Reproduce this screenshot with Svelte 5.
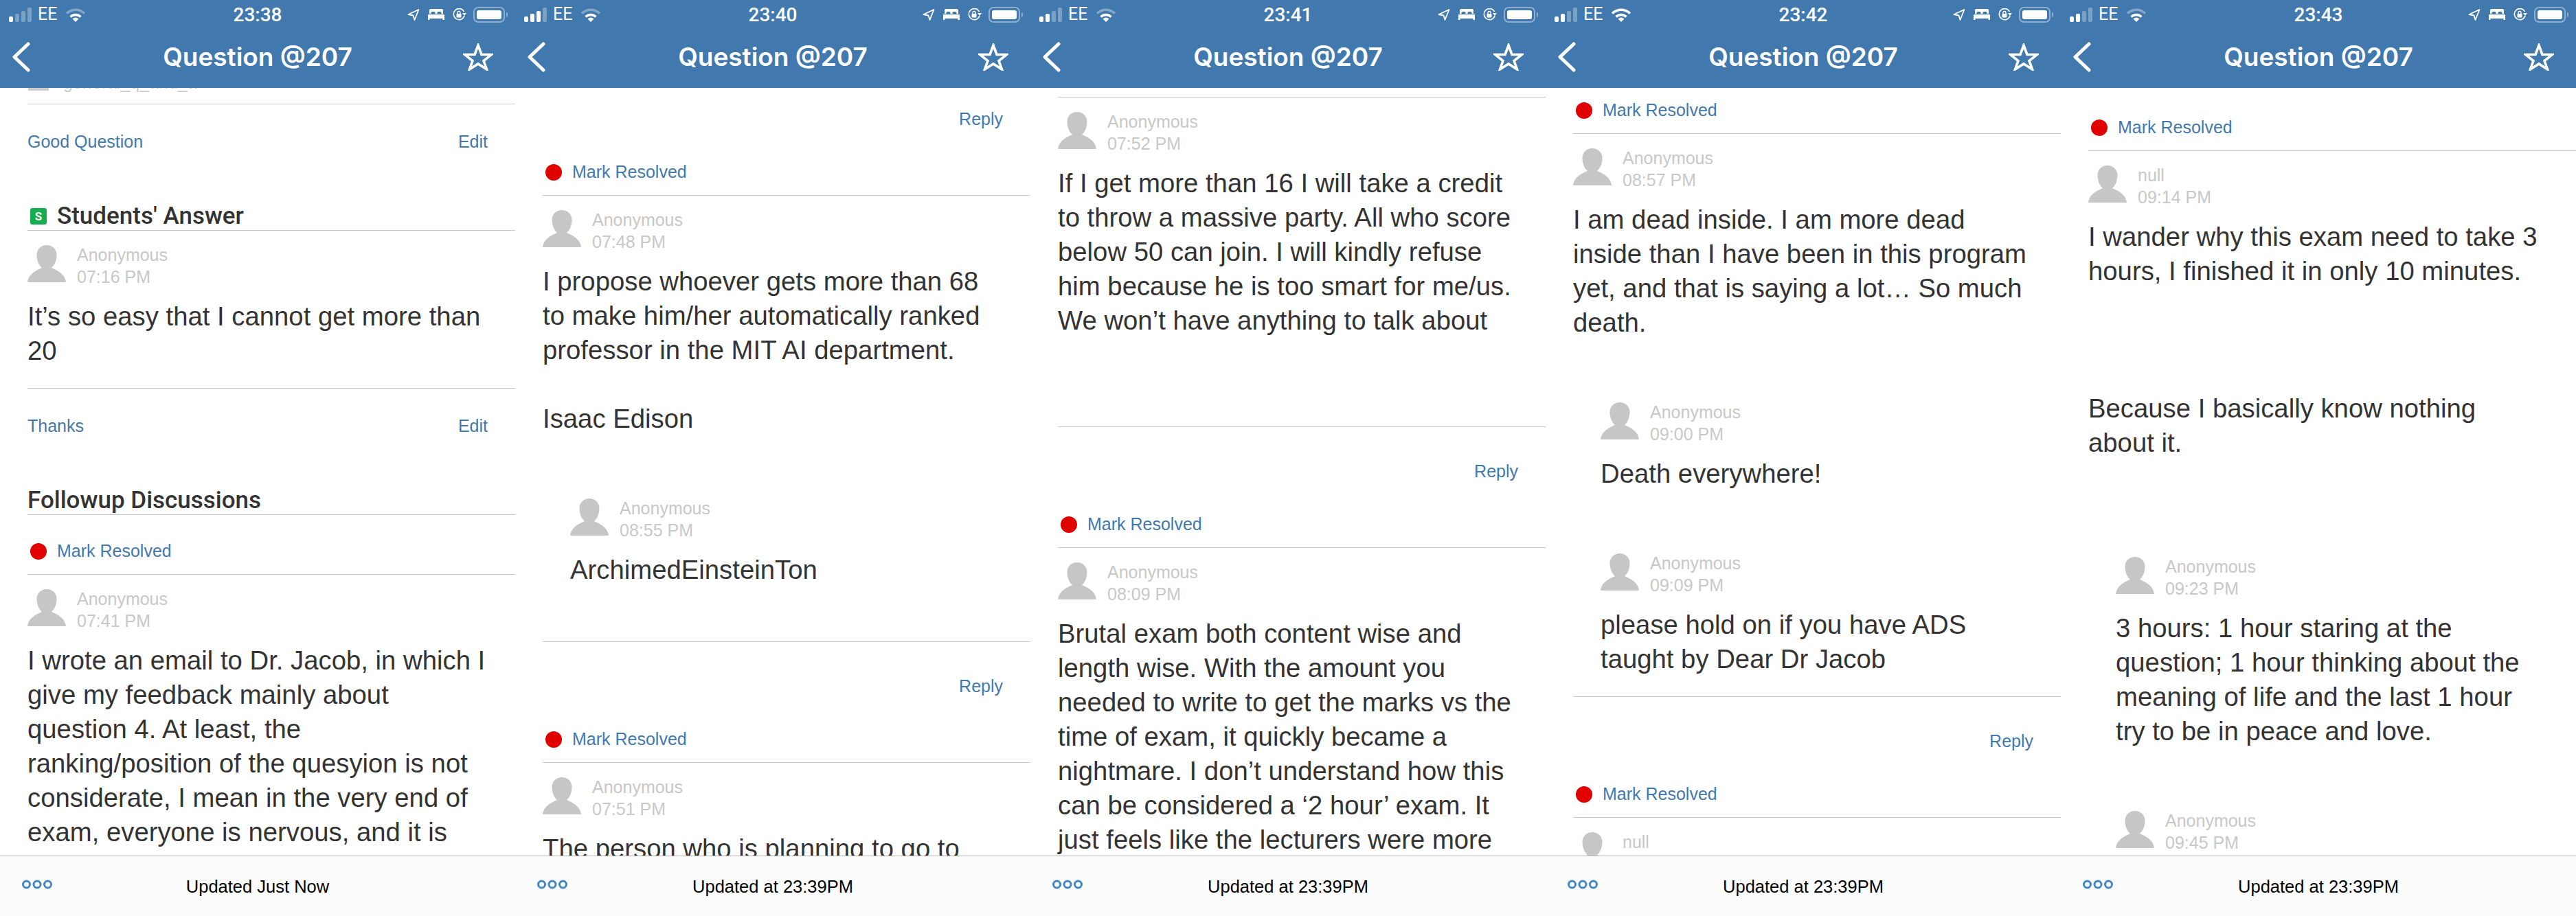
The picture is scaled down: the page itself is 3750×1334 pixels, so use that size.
<script>
	const anon = 'Anonymous';

	const panels = [
		{
			clock: '23:38', bars: 1, wifi: 2, updated: 'Updated Just Now', offset: -22,
			blocks: [
				{ kind: 'tag', text: 'general_q_and_a' },
				{ kind: 'rule' },
				{ kind: 'action', left: 'Good Question', right: 'Edit' },
				{ kind: 'head', text: "Students' Answer", badge: true },
				{ kind: 'post', name: anon, time: '07:16 PM', lines: ['It’s so easy that I cannot get more than', '20'] },
				{ kind: 'rule' },
				{ kind: 'action', left: 'Thanks', right: 'Edit' },
				{ kind: 'head', text: 'Followup Discussions' },
				{ kind: 'mark', first: true },
				{
					kind: 'post', name: anon, time: '07:41 PM',
					lines: [
						'I wrote an email to Dr. Jacob, in which I',
						'give my feedback mainly about',
						'question 4. At least, the',
						'ranking/position of the quesyion is not',
						'considerate, I mean in the very end of',
						'exam, everyone is nervous, and it is'
					]
				}
			]
		},
		{
			clock: '23:40', bars: 3, wifi: 2, updated: 'Updated at 23:39PM', offset: -19,
			blocks: [
				{ kind: 'reply' },
				{ kind: 'mark' },
				{
					kind: 'post', name: anon, time: '07:48 PM',
					lines: [
						'I propose whoever gets more than 68',
						'to make him/her automatically ranked',
						'professor in the MIT AI department.',
						'',
						'Isaac Edison'
					],
					replies: [{ name: anon, time: '08:55 PM', lines: ['ArchimedEinsteinTon', ''] }]
				},
				{ kind: 'rule' },
				{ kind: 'reply' },
				{ kind: 'mark' },
				{ kind: 'post', name: anon, time: '07:51 PM', lines: ['The person who is planning to go to'] }
			]
		},
		{
			clock: '23:41', bars: 2, wifi: 2, updated: 'Updated at 23:39PM', offset: 13,
			blocks: [
				{ kind: 'rule' },
				{
					kind: 'post', name: anon, time: '07:52 PM',
					lines: [
						'If I get more than 16 I will take a credit',
						'to throw a massive party. All who score',
						'below 50 can join. I will kindly refuse',
						'him because he is too smart for me/us.',
						'We won’t have anything to talk about',
						'',
						''
					]
				},
				{ kind: 'rule' },
				{ kind: 'reply' },
				{ kind: 'mark' },
				{
					kind: 'post', name: anon, time: '08:09 PM',
					lines: [
						'Brutal exam both content wise and',
						'length wise. With the amount you',
						'needed to write to get the marks vs the',
						'time of exam, it quickly became a',
						'nightmare. I don’t understand how this',
						'can be considered a ‘2 hour’ exam. It',
						'just feels like the lecturers were more'
					]
				}
			]
		},
		{
			clock: '23:42', bars: 2, wifi: 3, updated: 'Updated at 23:39PM', offset: -1,
			blocks: [
				{ kind: 'mark' },
				{
					kind: 'post', name: anon, time: '08:57 PM',
					lines: [
						'I am dead inside. I am more dead',
						'inside than I have been in this program',
						'yet, and that is saying a lot… So much',
						'death.'
					],
					replies: [
						{ name: anon, time: '09:00 PM', lines: ['Death everywhere!'] },
						{ name: anon, time: '09:09 PM', lines: ['please hold on if you have ADS', 'taught by Dear Dr Jacob'] }
					]
				},
				{ kind: 'rule' },
				{ kind: 'reply' },
				{ kind: 'mark' },
				{ kind: 'post', name: 'null', time: '09:14 PM', lines: [] }
			]
		},
		{
			clock: '23:43', bars: 2, wifi: 2, updated: 'Updated at 23:39PM', offset: 24,
			blocks: [
				{ kind: 'mark' },
				{
					kind: 'post', name: 'null', time: '09:14 PM',
					lines: [
						'I wander why this exam need to take 3',
						'hours, I finished it in only 10 minutes.',
						'',
						'',
						'',
						'Because I basically know nothing',
						'about it.',
						''
					],
					replies: [
						{
							name: anon, time: '09:23 PM',
							lines: [
								'3 hours: 1 hour staring at the',
								'question; 1 hour thinking about the',
								'meaning of life and the last 1 hour',
								'try to be in peace and love.'
							]
						},
						{ name: anon, time: '09:45 PM', lines: [] }
					]
				}
			]
		}
	];
</script>

{#snippet author(p)}
	<div class="author">
		<svg class="avatar" viewBox="0 0 56 54">
			<path d="M0 54C1 44 9 38 21 33 16 29 13.5 21 13.5 14 13.5 6 20 0 28 0s14.5 6 14.5 14c0 7-2.5 15-7.5 19 12 5 20 11 21 21z" />
		</svg>
		<div class="meta">
			<div>{p.name}</div>
			<div>{p.time}</div>
		</div>
	</div>
	<div class="text">
		{#each p.lines as line}
			<div class="line">{line}</div>
		{/each}
	</div>
{/snippet}

<div class="strip">
	{#each panels as panel}
		<section class="phone">
			<header class="top">
				<div class="status">
					<div class="left">
						<div class="bars">
							{#each [8, 12, 16, 21] as h, i}
								<span class="bar" class:on={i < panel.bars} style="height: {h}px"></span>
							{/each}
						</div>
						<span class="carrier">EE</span>
						<svg class="wifi" viewBox="0 0 30 21">
							<path class="arc" class:dim={panel.wifi < 3} d="M2 8.5c7.5-7 18.5-7 26 0" />
							<path class="arc" d="M7.5 13.5c4.5-4 10.5-4 15 0" />
							<path d="M10.5 16.5c3-2.5 6-2.5 9 0L15 21z" fill="#fff" />
						</svg>
					</div>
					<span class="clock">{panel.clock}</span>
					<div class="right">
						<svg class="loc" viewBox="0 0 18 17">
							<path d="M16.5 1 1.5 8l7 1.5L10.5 16z" fill="none" stroke="#fff" stroke-width="1.8" stroke-linejoin="round" />
						</svg>
						<svg class="bed" viewBox="0 0 24 16">
							<path fill-rule="evenodd" d="M4 0h16a2 2 0 0 1 2 2v5h-2.5V5.5A1.5 1.5 0 0 0 18 4h-3a1.5 1.5 0 0 0-1.5 1.5V7h-3V5.5A1.5 1.5 0 0 0 9 4H6a1.5 1.5 0 0 0-1.5 1.5V7H2V2a2 2 0 0 1 2-2zM1 8h22a1 1 0 0 1 1 1v7h-2.5v-2h-19v2H0V9a1 1 0 0 1 1-1z" fill="#fff" />
						</svg>
						<svg class="lock" viewBox="0 0 21 18">
							<path d="M16.5 5A8 8 0 1 0 17 11" fill="none" stroke="#fff" stroke-width="1.6" />
							<path d="M14 7h6l-3 4z" fill="#fff" />
							<rect x="5.5" y="8" width="7" height="5.5" rx="1" fill="#fff" />
							<path d="M7 8V6.5a2 2 0 0 1 4 0V8" fill="none" stroke="#fff" stroke-width="1.3" />
						</svg>
						<div class="battery"><span class="charge"></span></div>
						<span class="nub"></span>
					</div>
				</div>
				<div class="nav">
					<svg class="back" viewBox="0 0 26 44">
						<path d="M23 3 3 22l20 19" />
					</svg>
					<h1>Question @207</h1>
					<svg class="star" viewBox="0 0 44 40">
						<path d="M22 3l5 13.5h14.5L30 25.5 34.5 38 22 30 9.5 38 14 25.5 2.5 16.5H17z" />
					</svg>
				</div>
			</header>

			<div class="scroll">
				<div class="thread" style="margin-top: {panel.offset}px">
					{#each panel.blocks as b}
						{#if b.kind === 'tag'}
							<div class="tag"><span class="tag-box"></span>{b.text}</div>
						{:else if b.kind === 'rule'}
							<div class="rule"></div>
						{:else if b.kind === 'action'}
							<div class="action"><span>{b.left}</span><span>{b.right}</span></div>
						{:else if b.kind === 'reply'}
							<div class="action reply"><span>Reply</span></div>
						{:else if b.kind === 'head'}
							<h2 class="head">
								{#if b.badge}<span class="badge">S</span>{/if}{b.text}
							</h2>
						{:else if b.kind === 'mark'}
							<div class="mark" class:first={b.first}><span class="dot"></span>Mark Resolved</div>
						{:else}
							<div class="post">
								{@render author(b)}
								{#each b.replies ?? [] as r}
									<div class="nested">{@render author(r)}</div>
								{/each}
							</div>
						{/if}
					{/each}
				</div>
			</div>

			<footer class="foot">
				<svg class="more" viewBox="0 0 44 14">
					<circle cx="6.5" cy="7" r="5" />
					<circle cx="22" cy="7" r="5" />
					<circle cx="37.5" cy="7" r="5" />
				</svg>
				<span>{panel.updated}</span>
			</footer>
		</section>
	{/each}
</div>

<style>
	:global(body) {
		margin: 0;
		background: #fff;
	}

	.strip {
		display: flex;
		width: 3750px;
		height: 1334px;
		font-family: "Liberation Sans", Arial, sans-serif;
		color: #333;
	}

	.phone {
		width: 750px;
		height: 1334px;
		display: flex;
		flex-direction: column;
		overflow: hidden;
		flex: none;
	}

	.top {
		height: 128px;
		flex: none;
		background: #4179ae;
		color: #fff;
		font-family: Roboto, sans-serif;
	}

	.status {
		height: 42px;
		display: grid;
		grid-template-columns: 1fr auto 1fr;
		align-items: center;
	}

	.left {
		display: flex;
		align-items: center;
		padding-left: 13px;
	}

	.bars {
		display: flex;
		align-items: flex-end;
		gap: 3px;
		height: 21px;
	}

	.bar {
		width: 6px;
		border-radius: 2px;
		background: rgba(255, 255, 255, 0.3);
	}

	.bar.on {
		background: #fff;
	}

	.carrier {
		margin-left: 9px;
		font-size: 25px;
		line-height: 42px;
	}

	.wifi {
		width: 30px;
		height: 21px;
		margin-left: 12px;
		fill: none;
	}

	.arc {
		stroke: #fff;
		stroke-width: 3.5;
		fill: none;
	}

	.arc.dim {
		opacity: 0.35;
	}

	.clock {
		font-size: 28px;
		font-weight: 500;
	}

	.right {
		display: flex;
		align-items: center;
		justify-content: flex-end;
		padding-right: 11px;
	}

	.loc {
		width: 18px;
		height: 17px;
	}

	.bed {
		width: 24px;
		height: 16px;
		margin-left: 12px;
	}

	.lock {
		width: 21px;
		height: 18px;
		margin-left: 12px;
	}

	.battery {
		box-sizing: border-box;
		width: 46px;
		height: 23px;
		margin-left: 9px;
		padding: 3px;
		border: 2px solid rgba(255, 255, 255, 0.4);
		border-radius: 7px;
		display: flex;
	}

	.charge {
		flex: 1;
		background: #fff;
		border-radius: 3px;
	}

	.nub {
		width: 2px;
		height: 7px;
		margin-left: 2px;
		background: rgba(255, 255, 255, 0.4);
		border-radius: 0 2px 2px 0;
	}

	.nav {
		position: relative;
		height: 86px;
		display: flex;
		align-items: center;
		justify-content: center;
	}

	.nav h1 {
		margin: 0 0 4px;
		font-family: Inter, sans-serif;
		font-size: 37px;
		font-weight: 600;
		line-height: 50px;
	}

	.back {
		position: absolute;
		left: 18px;
		top: 19px;
		width: 26px;
		height: 44px;
		fill: none;
		stroke: #fff;
		stroke-width: 5;
		stroke-linecap: round;
		stroke-linejoin: round;
	}

	.star {
		position: absolute;
		left: 674px;
		top: 21px;
		width: 44px;
		height: 40px;
		fill: none;
		stroke: #fff;
		stroke-width: 3.6;
	}

	.scroll {
		flex: 1;
		min-height: 0;
		overflow: hidden;
		background: #fff;
	}

	.tag {
		display: flex;
		align-items: flex-end;
		height: 45px;
		box-sizing: border-box;
		padding: 0 0 17px 92px;
		position: relative;
		font-size: 25px;
		line-height: 28px;
		color: #ccc;
	}

	.tag-box {
		position: absolute;
		left: 41px;
		bottom: 19px;
		width: 30px;
		height: 20px;
		background: #ccc;
	}

	.rule {
		height: 1px;
		margin-left: 40px;
		background: #c8c8c8;
	}

	.action {
		display: flex;
		justify-content: space-between;
		padding: 39px 40px 0;
		font-size: 25px;
		line-height: 30px;
		color: #4178ae;
	}

	.action.reply {
		justify-content: flex-end;
		padding-top: 49px;
		padding-bottom: 29px;
	}

	.head {
		display: flex;
		align-items: center;
		height: 40px;
		margin: 74px 0 0 40px;
		border-bottom: 1px solid #c8c8c8;
		font-family: Roboto, sans-serif;
		font-size: 35px;
		font-weight: 500;
		line-height: 40px;
	}

	.badge {
		width: 24px;
		height: 24px;
		margin: 0 15px 0 4px;
		border-radius: 3px;
		background: #14ae50;
		color: #fff;
		font-size: 17px;
		font-weight: 700;
		line-height: 24px;
		text-align: center;
	}

	.mark {
		display: flex;
		align-items: center;
		box-sizing: border-box;
		height: 68px;
		margin-left: 40px;
		border-bottom: 1px solid #c8c8c8;
		font-size: 25px;
		color: #4178ae;
	}

	.mark.first {
		margin-top: 19px;
	}

	.dot {
		width: 24px;
		height: 24px;
		margin: 0 15px 0 4px;
		border-radius: 50%;
		background: #e00000;
	}

	.post {
		padding: 21px 0 0 40px;
	}

	.nested {
		padding: 62px 0 0 40px;
	}

	.author {
		display: flex;
		gap: 16px;
		height: 54px;
	}

	.avatar {
		width: 56px;
		height: 54px;
		flex: none;
		fill: #c6c6c6;
	}

	.meta {
		margin-top: -2px;
		font-size: 25px;
		line-height: 32px;
		color: #c8c8c8;
	}

	.text {
		padding: 25px 0 29px;
		font-size: 38.3px;
		line-height: 50px;
		color: #333;
	}

	.line {
		height: 50px;
		white-space: pre;
	}

	.foot {
		position: relative;
		height: 88px;
		flex: none;
		box-sizing: border-box;
		border-top: 1px solid #b4b4b4;
		background: #fcfcfc;
		display: flex;
		align-items: center;
		justify-content: center;
		font-size: 25.5px;
		color: #000;
	}

	.foot span {
		position: relative;
		top: 1px;
	}

	.more {
		position: absolute;
		left: 32px;
		top: 34px;
		width: 44px;
		height: 14px;
		fill: none;
		stroke: #3f87c5;
		stroke-width: 3;
	}
</style>
